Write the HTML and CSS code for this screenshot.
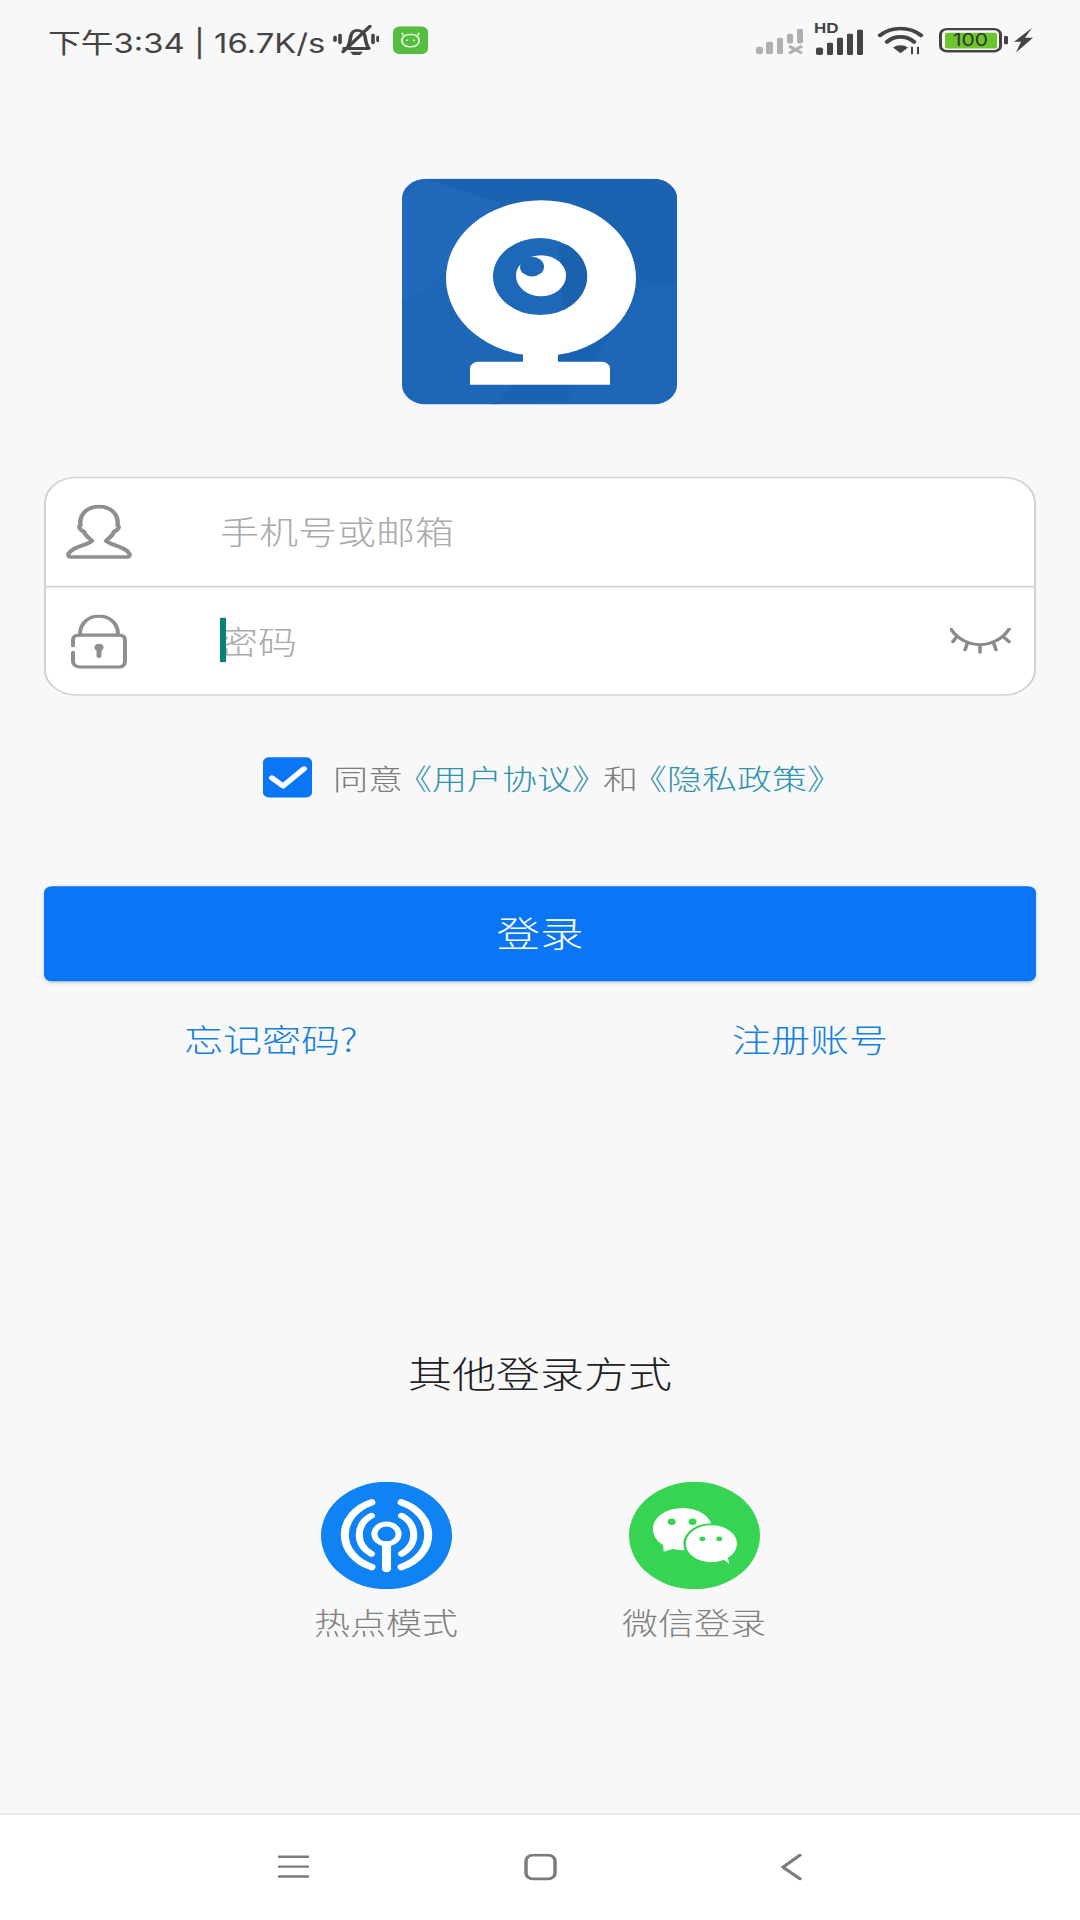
FILE: index.html
```html
<!DOCTYPE html>
<html lang="zh-CN">
<head>
<meta charset="utf-8">
<title>登录</title>
<link rel="stylesheet" href="styles.css">
</head>
<body>
<div class="frame">
<div class="screen">
  <header class="status">
    <div class="status-left">
      <span class="status-text">下午3:34 | 16.7K/s</span>
      <svg class="ic-bell" viewBox="0 0 46 38"><g fill="none" stroke="#444" stroke-width="3.600" stroke-linecap="round" stroke-linejoin="round"><path d="M15 27c2-4 2-9 3-14 1-4 3-6 6-6 4 0 7 3 8 7 .5 5 1 11 4 15H11"/><path d="M10 33 37 2"/><path d="M7 13v9M2 15.500v4M40 13v9M45 15.500v4"/></g><path d="M17 33h13l-3 4h-7z" fill="#444"/></svg>
      <svg class="ic-chip" viewBox="0 0 35 34"><rect width="35" height="34" rx="7" fill="#55bd3f"/><g fill="none" stroke="#e6f6df" stroke-width="1.800"><rect x="9" y="10" width="17" height="15" rx="7"/><path d="M10 11 9 8M25 11l1-3"/></g><path d="M13 16h2v2h-2zM20 16h2v2h-2z" fill="#e6f6df"/></svg>
    </div>
    <div class="status-right">
      <svg class="ic-sig1" viewBox="0 0 47 31"><g fill="#b0b0b0"><rect x="0" y="22" width="7" height="9" rx="2.500"/><rect x="10" y="16" width="7" height="15" rx="2"/><rect x="21" y="11" width="6" height="20" rx="2"/><rect x="31" y="6" width="6" height="12" rx="2"/><rect x="41" y="0" width="6" height="18" rx="2"/></g><path d="M33 21 46 30M46 21 33 30" stroke="#b0b0b0" stroke-width="3.500" fill="none"/></svg>
      <div class="hd-wrap">
        <span class="hd">HD</span>
        <svg class="ic-sig2" viewBox="0 0 49 31"><g fill="#444"><rect x="2" y="22" width="7" height="9" rx="2"/><rect x="13" y="16" width="6" height="15" rx="1.500"/><rect x="23" y="10" width="6" height="21" rx="1.500"/><rect x="33" y="5" width="6" height="26" rx="1.500"/><rect x="43" y="0" width="6" height="31" rx="1.500"/></g></svg>
      </div>
      <svg class="ic-wifi" viewBox="0 0 47 35"><g fill="none" stroke="#444" stroke-width="4.500" stroke-linecap="round"><path d="M3 11C15 0 32 0 44 11"/><path d="M10 19C18 11 29 11 37 19"/></g><path d="M16 26c4-4 11-4 15 0l-7.500 7z" fill="#444"/><path d="M35 25v9M41 25v9" stroke="#444" stroke-width="2"/></svg>
      <div class="battery">
        <div class="battery-body"><span class="battery-fill">100</span></div>
        <span class="battery-nub"></span>
      </div>
      <svg class="ic-bolt" viewBox="0 0 20 30"><path d="M19 0 1 17h7L3 30l17-18h-8z" fill="#444"/></svg>
    </div>
  </header>

  <main class="main">
    <svg class="logo" viewBox="0 0 275 275">
      <rect width="275" height="275" fill="#1e66b6"/>
      <path d="M24 0H275V130L240 131 165 270 90 275C110 270 210 100 100 30Z" fill="#1b62b0"/>
      <path d="M0 24 24 0 100 30C60 60 50 130 0 150Z" fill="#2269bb"/>
      <circle cx="139" cy="121" r="95" fill="#fff"/>
      <path d="M121 205h35v30h-35z" fill="#fff"/>
      <path d="M68 251v-20a8 8 0 0 1 8-8h124a8 8 0 0 1 8 8v20z" fill="#fff"/>
      <circle cx="138" cy="119" r="47" fill="#1e68b9"/>
      <path d="M166 81a47 47 0 0 1-5 79l-1-30q2-30-5-49z" fill="#1a61ae"/>
      <circle cx="139" cy="118" r="25" fill="#fff"/>
      <circle cx="130" cy="107" r="12" fill="#1e68b9"/>
    </svg>

    <form class="card">
      <div class="row">
        <svg class="ic-user" viewBox="0 0 66 66"><path d="M26 44C22 40 19 37 18 33 14 31 12 27 14.500 25 13 12 21 2.500 33 2.500S53 12 51.500 25C54 27 52 31 48 33 47 37 44 40 40 44 45 50 60 51 63.500 60 64 63 63 64 60 64H6C3 64 2 63 2.500 60 6 51 21 50 26 44Z" fill="none" stroke="#8f8f8f" stroke-width="4.500" stroke-linejoin="round"/></svg>
        <span class="field placeholder">手机号或邮箱</span>
      </div>
      <div class="row row-pass">
        <svg class="ic-lock" viewBox="0 0 56 66"><g fill="none" stroke="#8f8f8f" stroke-width="4" stroke-linecap="round"><path d="M9 25V24C9 10 18 2 28 2S47 10 47 24V25"/><path d="M2 38V31C2 27 4 25 8 25H48C52 25 54 27 54 31V57C54 61 52 64 48 64H9C5 64 2 61 2 57V46"/></g><circle cx="28" cy="40" r="4.500" fill="#8f8f8f"/><rect x="25.500" y="41" width="5" height="12" rx="2.500" fill="#8f8f8f"/></svg>
        <span class="field placeholder with-caret"><i class="caret"></i>密码</span>
        <svg class="ic-eye" viewBox="0 0 61 32"><path d="M1 2C15 27 45 27 59 2M6 12 3 17M17 20 15 27M30 22V30M44 20 46 27M54 12 59 17" fill="none" stroke="#8a8a8a" stroke-width="3.600" stroke-linecap="round"/></svg>
      </div>
    </form>

    <div class="agree">
      <span class="check"><svg viewBox="0 0 49 49"><path d="M9 25 20 35 41 14" fill="none" stroke="#fff" stroke-width="6" stroke-linecap="round" stroke-linejoin="round"/></svg></span>
      <p class="agree-text">同<span class="before-quote">意</span><a class="term">《用户协议<span class="close">》</span></a><span class="before-quote">和</span><a class="term">《隐私政策<span class="close">》</span></a></p>
    </div>

    <button class="login" type="button">登录</button>

    <div class="links">
      <a class="link">忘记密码?</a>
      <a class="link">注册账号</a>
    </div>

    <h2 class="other-title">其他登录方式</h2>

    <div class="other">
      <div class="method">
        <svg class="method-icon" viewBox="0 0 130 130"><circle cx="65" cy="65" r="65" fill="#0f82f4"/><g fill="none" stroke="#fff" stroke-linecap="round"><circle cx="65" cy="63" r="12" stroke-width="6"/><path d="M65 76V105" stroke-width="9"/><path d="M50 25A42 42 0 0 0 50 103M80 25A42 42 0 0 1 80 103" stroke-width="8"/><path d="M50 41A28 28 0 0 0 50 87M80 41A28 28 0 0 1 80 87" stroke-width="7"/></g></svg>
        <span class="method-label">热点模式</span>
      </div>
      <div class="method">
        <svg class="method-icon" viewBox="0 0 132 132"><circle cx="66" cy="66" r="66" fill="#37d353"/><ellipse cx="54" cy="58" rx="30" ry="26" fill="#fff"/><path d="M34 74 35 86 50 80z" fill="#fff"/><ellipse cx="83" cy="76" rx="27" ry="24" fill="#fff" stroke="#37d353" stroke-width="2.500"/><path d="M92 92 101 101 98 84z" fill="#fff"/><circle cx="43" cy="49" r="4" fill="#37d353"/><circle cx="64" cy="49" r="4" fill="#37d353"/><circle cx="74" cy="70" r="3" fill="#37d353"/><circle cx="91" cy="70" r="3" fill="#37d353"/></svg>
        <span class="method-label">微信登录</span>
      </div>
    </div>
  </main>

  <nav class="nav">
    <svg class="nav-menu" viewBox="0 0 31 30"><path d="M1 3H30M1 15H30M1 27H30" stroke="#7c7c7c" stroke-width="3" stroke-linecap="round" fill="none"/></svg>
    <svg class="nav-home" viewBox="0 0 33 33"><rect x="2" y="2" width="29" height="29" rx="7" fill="none" stroke="#7c7c7c" stroke-width="3.500"/></svg>
    <svg class="nav-back" viewBox="0 0 21 33"><path d="M19 2 2 16.500 19 31" fill="none" stroke="#7c7c7c" stroke-width="3.500" stroke-linecap="round" stroke-linejoin="round"/></svg>
  </nav>
</div>
</div>
</body>
</html>
```

FILE: styles.css
```css
* { box-sizing: border-box; }
html, body {
  margin: 0;
  width: 1080px;
  height: 1920px;
  overflow: hidden;
  background: #f8f8f8;
}
.frame { width: 1080px; height: 1920px; overflow: clip; }
.screen {
  width: 1080px;
  height: 2340px;
  transform: scaleY(0.8205);
  transform-origin: 0 0;
  display: flex;
  flex-direction: column;
  background: #f8f8f8;
  font-family: "Noto Sans CJK SC", "Noto Sans", sans-serif;
  font-weight: 300;
}
svg { display: block; flex: none; }

/* status bar */
.status {
  height: 98px;
  padding: 0 47px 0 48px;
  display: flex;
  justify-content: space-between;
  align-items: center;
  color: #444;
}
.status-left, .status-right { display: flex; align-items: center; }
.status-text { font-family: Inter, "Noto Sans CJK SC", sans-serif; font-size: 32.800px; font-weight: 400; white-space: nowrap; }
.ic-bell { width: 46px; height: 38px; margin-left: 8px; }
.ic-chip { width: 35px; height: 34px; margin-left: 14px; }
.ic-sig1 { width: 47px; height: 31px; margin-top: 2px; }
.hd-wrap { position: relative; margin-left: 11px; margin-top: 4px; }
.hd { position: absolute; left: 0; top: -9px; font: 700 17px/16px "Liberation Sans", sans-serif; color: #444; }
.ic-sig2 { width: 49px; height: 31px; }
.ic-wifi { width: 47px; height: 35px; margin-left: 14px; }
.battery { display: flex; align-items: center; margin-left: 15px; }
.battery-body { width: 63px; height: 30px; border: 3.500px solid #444; border-radius: 8px; padding: 2.500px; display: flex; }
.battery-fill { flex: 1; background: #6cc52e; border-radius: 2px; font: 400 21px/18px Inter, sans-serif; color: #333; text-align: center; }
.battery-nub { width: 4px; height: 10px; margin-left: 2px; background: #444; border-radius: 1px; }
.ic-bolt { width: 20px; height: 30px; margin-left: 5px; }

/* main */
.main { flex: 1; display: flex; flex-direction: column; align-items: center; }
.logo { width: 275px; height: 275px; margin-top: 120px; margin-right: 2px; border-radius: 24px; }
.card {
  width: 992px;
  height: 267px;
  margin-top: 88px;
  background: #fff;
  border: 2.500px solid #d2d2d2;
  border-radius: 32px;
  display: flex;
  flex-direction: column;
}
.row { flex: 1; display: flex; align-items: center; padding: 0 22px 0 20px; }
.row-pass { border-top: 2.500px solid #d2d2d2; }
.ic-user { width: 66px; height: 66px; }
.ic-lock { width: 56px; height: 66px; margin-left: 5px; margin-top: 2px; }
.field { font-size: 39px; line-height: 54px; margin-left: 88px; margin-bottom: 5px; }
.row-pass .field { margin-left: 92px; margin-bottom: 2px; }
.placeholder { color: #aaa; }
.with-caret { flex: 1; position: relative; }
.caret { position: absolute; left: 1px; top: 0; width: 6px; height: 54px; background: #0b8276; }
.ic-eye { width: 61px; height: 32px; margin-right: 1px; }

.agree { display: flex; align-items: center; margin-top: 75px; width: 100%; padding-left: 263px; }
.check { width: 49px; height: 49px; background: #0a76f5; border-radius: 6px; }
.agree-text { margin: 0 0 0 21px; font-size: 35px; line-height: 49px; color: #7c7c7c; white-space: nowrap; }
.term { color: #2f93b0; }
.before-quote { letter-spacing: -6px; }
.close { letter-spacing: -4px; }

.login {
  width: 992px;
  height: 116px;
  margin-top: 108px;
  padding: 0 0 5px;
  border: 0;
  border-radius: 8px;
  background: #0a76f5;
  box-shadow: 0 2px 4px rgba(0,0,0,.18);
  color: #fff;
  font: inherit;
  font-size: 43.500px;
}
.links { width: 100%; padding: 0 192px 0 184px; margin-top: 42px; display: flex; justify-content: space-between; }
.link { font-size: 39px; line-height: 54px; color: #1580e0; }

.other-title { margin: 0; margin-top: 351px; font-size: 44px; line-height: 60px; font-weight: 300; color: #222; }
.other { display: flex; gap: 164px; margin-top: 103px; }
.method { width: 144px; display: flex; flex-direction: column; align-items: center; }
.method-icon { width: 131px; height: 131px; }
.method-label { margin-top: 14px; font-size: 36px; line-height: 50px; color: #808080; white-space: nowrap; }

/* nav */
.nav {
  height: 130px;
  background: #fff;
  border-top: 2px solid #e8e8e8;
  display: flex;
  align-items: center;
  justify-content: center;
  padding-bottom: 2px;
}
.nav-menu { width: 31px; height: 30px; margin-right: 215px; }
.nav-home { width: 33px; height: 33px; margin-right: 224px; }
.nav-back { width: 21px; height: 33px; }
```
